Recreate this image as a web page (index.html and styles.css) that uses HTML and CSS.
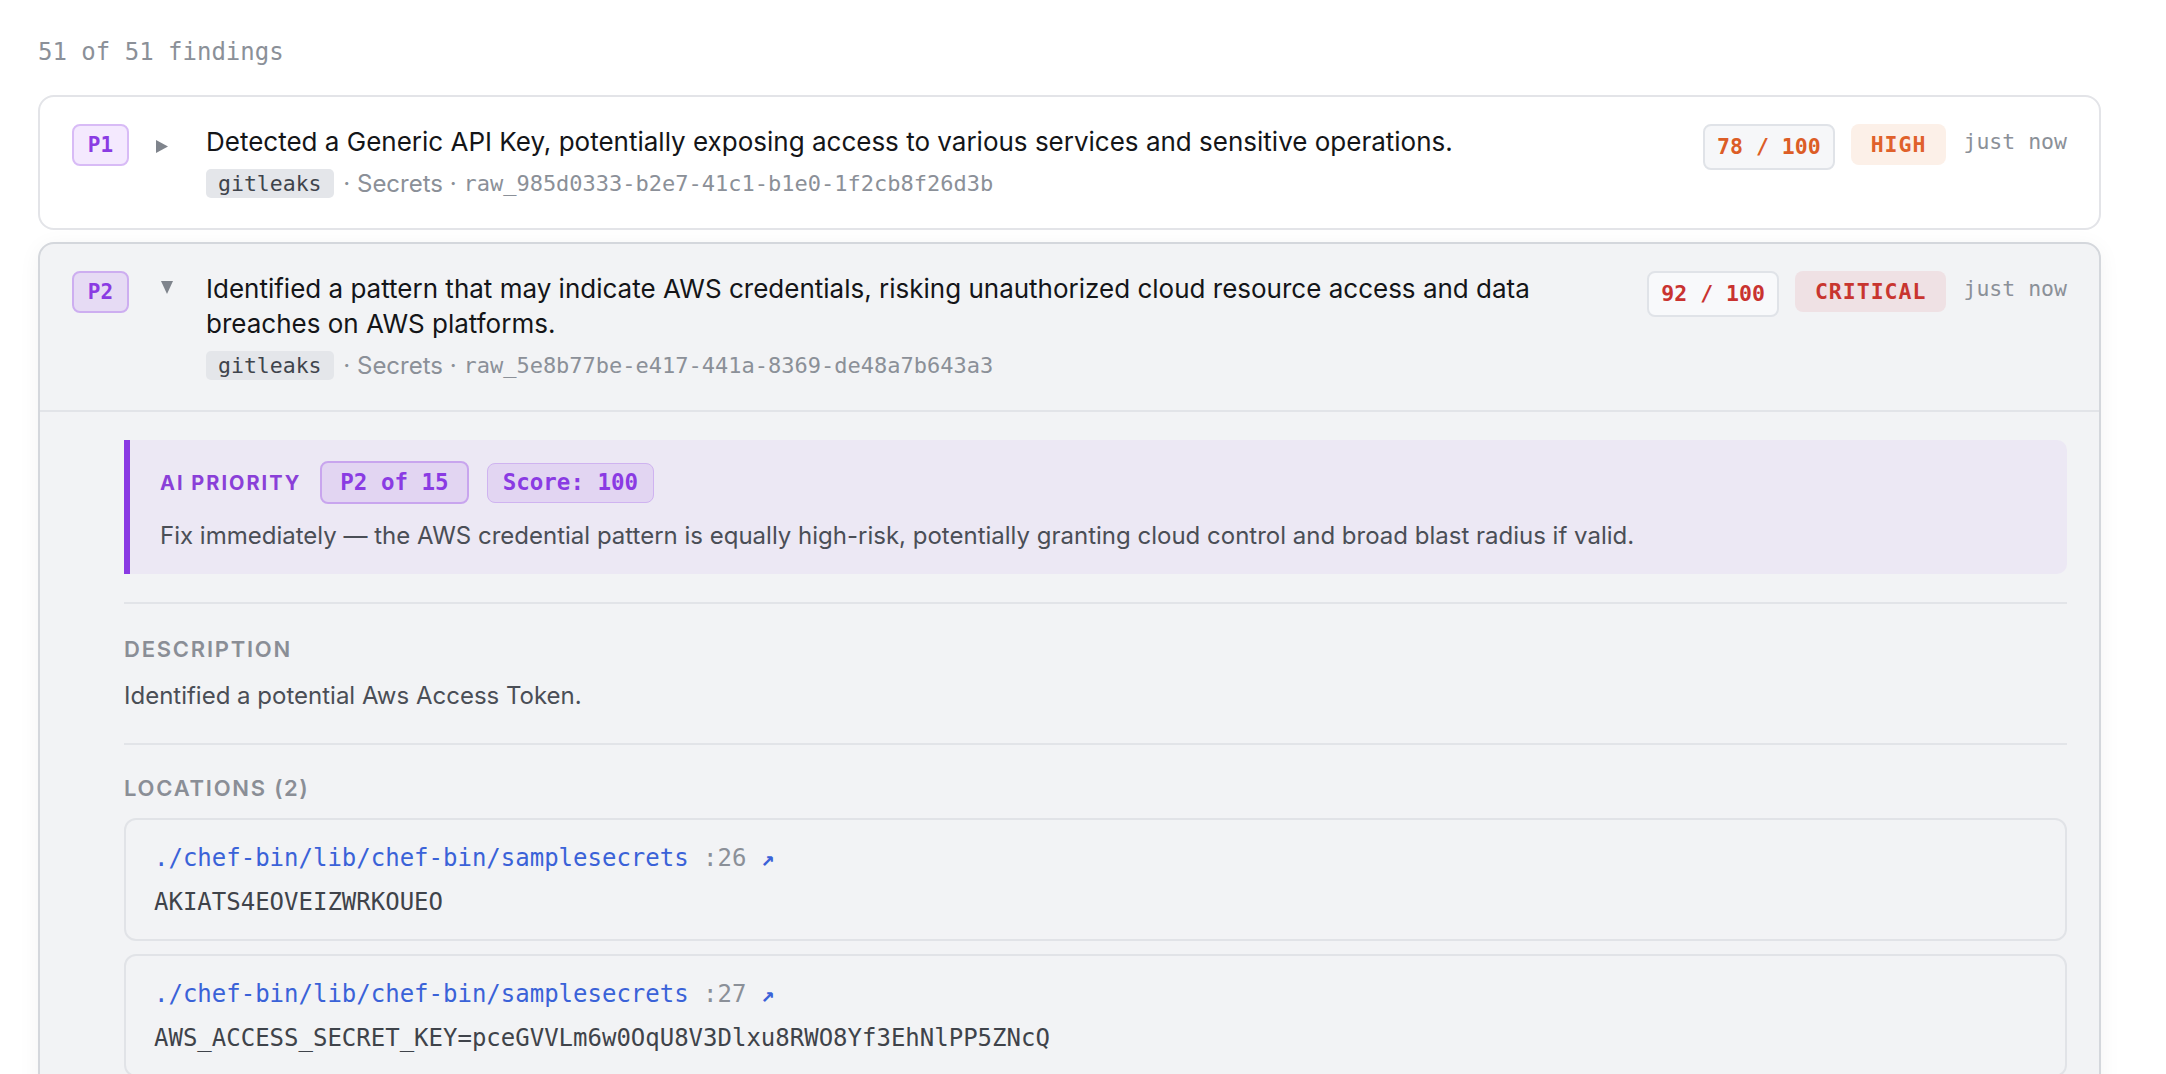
FILE: index.html
```html
<!DOCTYPE html>
<html lang="en">
<head>
  <meta charset="UTF-8">
  <meta name="viewport" content="width=device-width, initial-scale=1.0">
  <title>Findings</title>
  <link rel="stylesheet" href="styles.css">
</head>
<body>
  <div class="page">
    <div class="count">51 of 51 findings</div>

    <div class="list">
      <div class="finding">
        <div class="finding-head">
          <span class="prio">P1</span>
          <span class="toggle">
            <svg width="12" height="13" viewBox="0 0 12 13"><polygon points="0,0 12,6.5 0,13" /></svg>
          </span>
          <div class="summary">
            <div class="title">Detected a Generic API Key, potentially exposing access to various services and sensitive operations.</div>
            <div class="meta"><span class="tool">gitleaks</span> · Secrets · <span class="raw">raw_985d0333-b2e7-41c1-b1e0-1f2cb8f26d3b</span></div>
          </div>
          <div class="stats">
            <span class="score high">78 / 100</span>
            <span class="sev high">HIGH</span>
            <span class="when">just now</span>
          </div>
        </div>
      </div>

      <div class="finding open">
        <div class="finding-head">
          <span class="prio">P2</span>
          <span class="toggle open">
            <svg width="12" height="13" viewBox="0 0 12 13"><polygon points="0,0 12,0 6,13" /></svg>
          </span>
          <div class="summary">
            <div class="title">Identified a pattern that may indicate AWS credentials, risking unauthorized cloud resource access and data breaches on AWS platforms.</div>
            <div class="meta"><span class="tool">gitleaks</span> · Secrets · <span class="raw">raw_5e8b77be-e417-441a-8369-de48a7b643a3</span></div>
          </div>
          <div class="stats">
            <span class="score critical">92 / 100</span>
            <span class="sev critical">CRITICAL</span>
            <span class="when">just now</span>
          </div>
        </div>

        <div class="finding-body">
          <div class="ai-box">
            <div class="ai-row">
              <span class="ai-label">AI PRIORITY</span>
              <span class="pill strong">P2 of 15</span>
              <span class="pill">Score: 100</span>
            </div>
            <p class="ai-text">Fix immediately — the AWS credential pattern is equally high-risk, potentially granting cloud control and broad blast radius if valid.</p>
          </div>

          <div class="section">
            <div class="section-label">DESCRIPTION</div>
            <p class="section-text">Identified a potential Aws Access Token.</p>
          </div>

          <div class="section">
            <div class="section-label">LOCATIONS (2)</div>
            <div class="location">
              <div class="loc-path"><span class="path">./chef-bin/lib/chef-bin/samplesecrets</span> <span class="line">:26</span> <span class="ext">↗</span></div>
              <div class="loc-code">AKIATS4EOVEIZWRKOUEO</div>
            </div>
            <div class="location">
              <div class="loc-path"><span class="path">./chef-bin/lib/chef-bin/samplesecrets</span> <span class="line">:27</span> <span class="ext">↗</span></div>
              <div class="loc-code">AWS_ACCESS_SECRET_KEY=pceGVVLm6w0OqU8V3Dlxu8RWO8Yf3EhNlPP5ZNcQ</div>
            </div>
          </div>
        </div>
      </div>
    </div>
  </div>
</body>
</html>
```

FILE: styles.css
```css
* {
  box-sizing: border-box;
}
body {
  margin: 0;
  background: #fff;
  font-family: "Inter", "Liberation Sans", sans-serif;
  color: #17181c;
}
.page {
  padding: 35px 65px 0 38px;
}
.count {
  font-family: "DejaVu Sans Mono", "Liberation Mono", monospace;
  font-size: 24px;
  line-height: 34px;
  color: #8b9098;
  margin-bottom: 26px;
}
.list {
  display: flex;
  flex-direction: column;
  gap: 12px;
}
.finding {
  background: #fff;
  border: 2px solid #e3e4e8;
  border-radius: 16px;
}
.finding.open {
  background: #f2f3f5;
  border-color: #d4d7dc;
  box-shadow: 0 4px 22px rgba(0, 0, 0, 0.05);
}
.finding-head {
  display: flex;
  align-items: flex-start;
  padding: 27px 32px 30px 32px;
}
.finding.open .finding-head {
  border-bottom: 2px solid #e2e4e8;
}
.prio {
  flex: none;
  width: 57px;
  height: 42px;
  line-height: 38px;
  text-align: center;
  font-family: "DejaVu Sans Mono", monospace;
  font-weight: bold;
  font-size: 21px;
  color: #8a3be3;
  background: #f4e9fe;
  border: 2px solid #d8bbf6;
  border-radius: 8px;
}
.finding.open .prio {
  background: #e6dbf4;
  border-color: #cdaef0;
}
.toggle {
  flex: none;
  width: 77px;
  padding-left: 27px;
  padding-top: 16px;
  line-height: 0;
}
.toggle.open {
  padding-left: 32px;
  padding-top: 10px;
}
.toggle svg {
  fill: #7f848c;
}
.summary {
  flex: 1;
  min-width: 0;
}
.title {
  font-size: 26px;
  line-height: 35px;
  color: #141518;
}
.meta {
  margin-top: 10px;
  display: flex;
  align-items: center;
  white-space: pre;
  font-size: 24px;
  color: #8b9098;
}
.tool {
  font-family: "DejaVu Sans Mono", monospace;
  font-size: 21.5px;
  color: #3f444c;
  background: #e4e6ea;
  border-radius: 5px;
  height: 29px;
  line-height: 29px;
  padding: 0 12px;
  margin-right: 3px;
}
.raw {
  font-family: "DejaVu Sans Mono", monospace;
  font-size: 22px;
  color: #8b9098;
}
.stats {
  flex: none;
  display: flex;
  align-items: flex-start;
  gap: 16px;
  margin-left: 48px;
}
.score {
  height: 46px;
  line-height: 42px;
  padding: 0 12px;
  font-family: "DejaVu Sans Mono", monospace;
  font-weight: bold;
  font-size: 21.5px;
  background: #f6f7f9;
  border: 2px solid #e0e3e8;
  border-radius: 8px;
}
.score.high {
  color: #dc5d26;
}
.score.critical {
  color: #c93330;
  background: #f8f9fb;
}
.sev {
  height: 41px;
  line-height: 41px;
  padding: 0 20px;
  font-family: "DejaVu Sans Mono", monospace;
  font-weight: bold;
  font-size: 21.5px;
  letter-spacing: 1px;
  border-radius: 8px;
}
.sev.high {
  color: #e0612b;
  background: #fcf0e8;
}
.sev.critical {
  color: #c8352f;
  background: #efe1e4;
}
.when {
  margin-left: 1px;
  line-height: 36px;
  font-family: "DejaVu Sans Mono", monospace;
  font-size: 21.5px;
  color: #8b9098;
}
.finding-body {
  padding: 28px 32px 0 84px;
}
.ai-box {
  background: #ece8f4;
  border-left: 6px solid #8a3ae3;
  border-radius: 0 10px 10px 0;
  padding: 21px 30px 23px 30px;
}
.ai-row {
  display: flex;
  align-items: center;
  gap: 18px;
}
.ai-label {
  font-weight: 700;
  font-size: 20px;
  letter-spacing: 0.1em;
  color: #8a3fd8;
  margin-right: 1px;
}
.pill {
  height: 40px;
  line-height: 37px;
  padding: 0 15px;
  font-family: "DejaVu Sans Mono", monospace;
  font-weight: bold;
  font-size: 22.5px;
  color: #8a3be3;
  background: #e2d5f2;
  border: 1.5px solid #cfb3f0;
  border-radius: 8px;
}
.pill.strong {
  height: 43px;
  line-height: 39px;
  padding: 0 18px;
  border: 2px solid #c8a5ee;
}
.ai-text {
  margin: 16px 0 0;
  font-size: 24px;
  line-height: 31px;
  color: #4a4e56;
}
.section {
  margin-top: 28px;
  border-top: 2px solid #e2e4e8;
  padding: 31px 0 31px;
}
.section-label {
  font-weight: 600;
  font-size: 22px;
  line-height: 28px;
  letter-spacing: 0.08em;
  color: #8a8e96;
}
.section-text {
  margin: 17px 0 0;
  font-size: 24px;
  line-height: 32px;
  color: #4a4e56;
}
.section + .section {
  margin-top: 0;
  padding-top: 29px;
}
.section + .section .section-label {
  margin-bottom: 16px;
}
.location {
  border: 2px solid #e1e3e7;
  border-radius: 12px;
  padding: 21px 28px 20px;
  margin-bottom: 13px;
}
.loc-path {
  font-family: "DejaVu Sans Mono", monospace;
  font-size: 24px;
  line-height: 34px;
}
.path {
  color: #3a62d8;
}
.line {
  color: #8b9098;
}
.ext {
  color: #3a62d8;
  font-size: 22px;
  font-weight: bold;
}
.loc-code {
  margin-top: 9px;
  font-family: "DejaVu Sans Mono", monospace;
  font-size: 24px;
  line-height: 34px;
  color: #3f434a;
}
```
